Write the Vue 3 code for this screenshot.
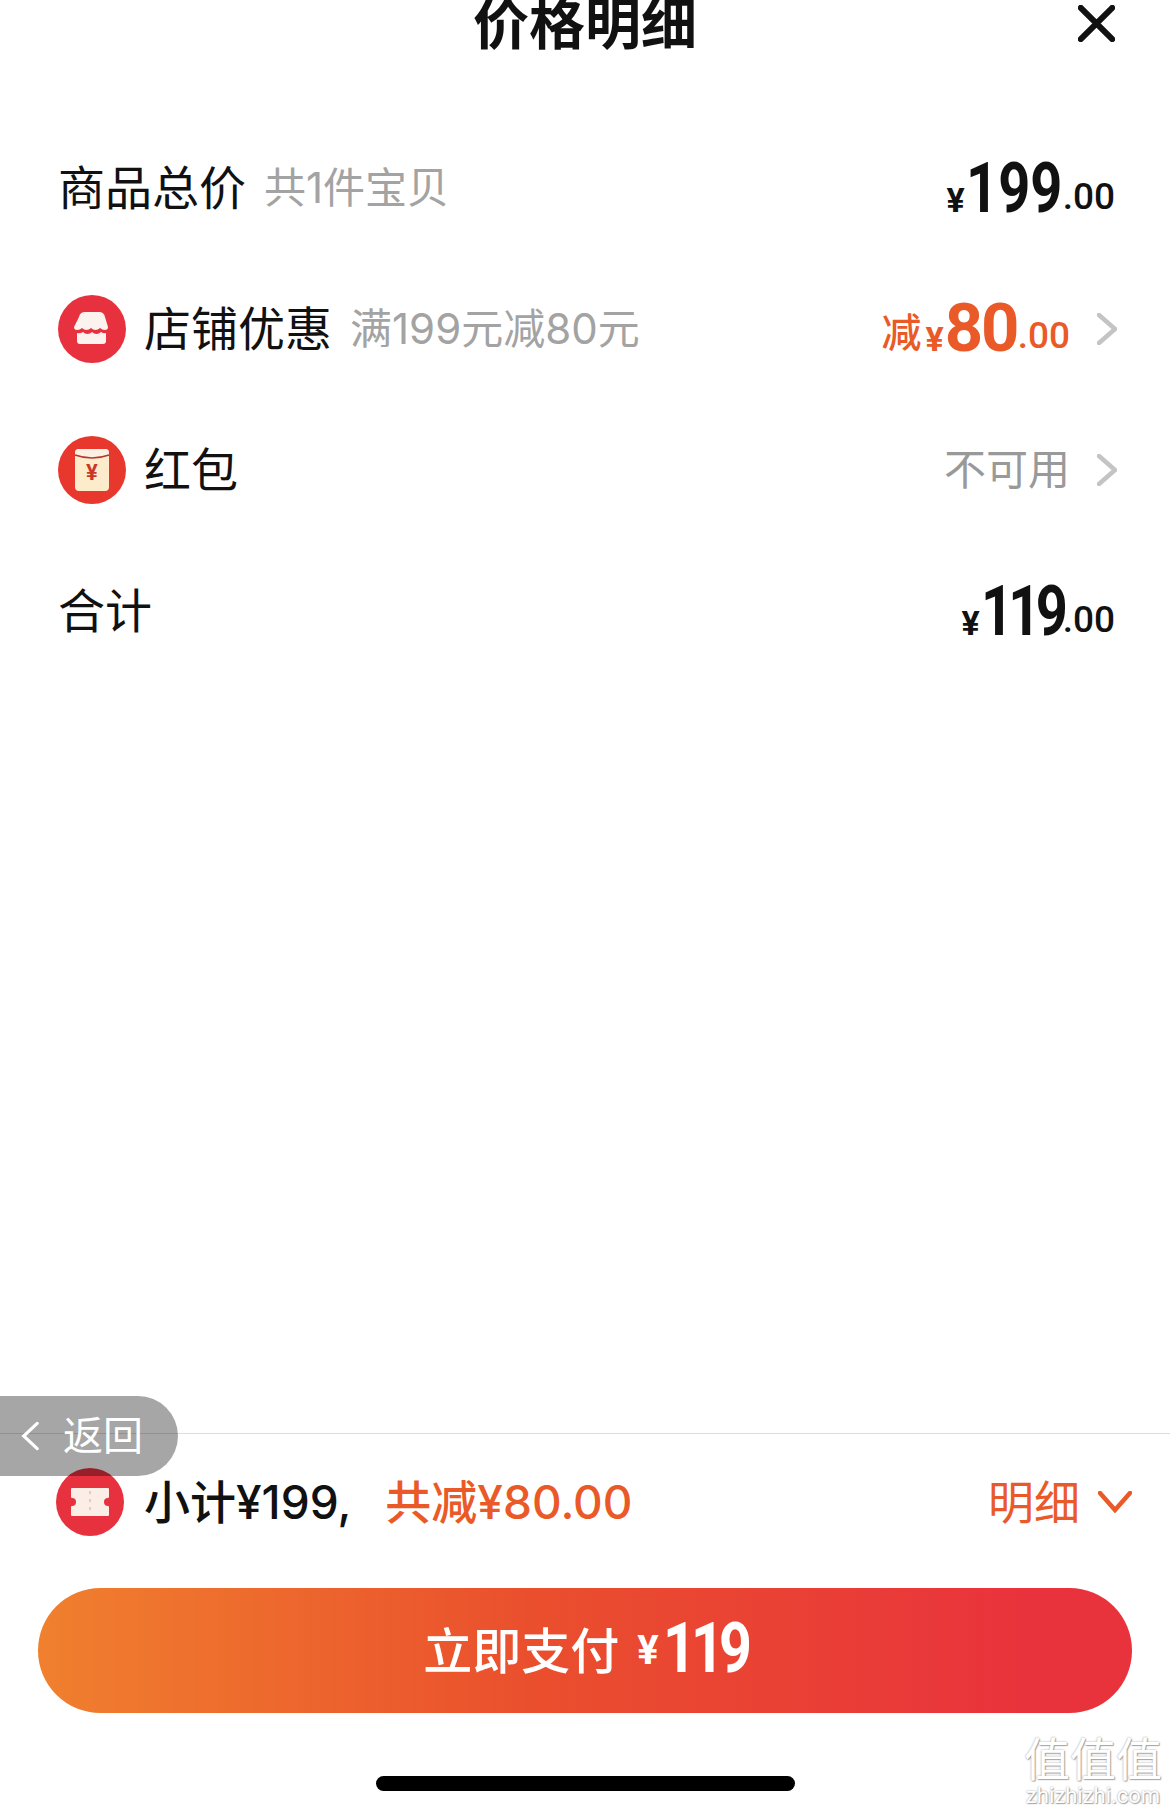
<template>
  <div class="page">
    <header class="head">
      <h1 class="title">价格明细</h1>
      <svg class="close" viewBox="0 0 40 40"><path d="M3 3 37 37M37 3 3 37" /></svg>
    </header>

    <section class="list">
      <div class="row">
        <span class="name">商品总价</span>
        <span class="sub">共1件宝贝</span>
        <div class="price">
          <span class="yen">¥</span><span class="big">199</span><span class="cents">.00</span>
        </div>
      </div>

      <div class="row">
        <svg class="badge" viewBox="0 0 68 68">
          <circle cx="34" cy="34" r="34" fill="#e8313f" />
          <path d="M21 22q1-5 6-5h14q5 0 6 5l3 10q0 3-3 3q-3 0-5-2q-2 2-4.500 2t-4.500-2q-2 2-4.500 2t-4.500-2q-2 2-5 2q-3 0-3-3z" fill="#fdf3ee" />
          <path d="M19 38q3 1 6-1q2 2 4.500 2t4.500-2q2 2 4.500 2t4.500-2q3 2 5 1v8q0 3-3 3h-23q-3 0-3-3z" fill="#fdf3ee" />
        </svg>
        <span class="name">店铺优惠</span>
        <span class="sub">满199元减80元</span>
        <div class="price orange">
          <span class="minus">减</span><span class="yen">¥</span><span class="big wide">80</span><span class="cents">.00</span>
        </div>
        <svg class="arrow" viewBox="0 0 20 32"><path d="M2 2 18 16 2 30" /></svg>
      </div>

      <div class="row">
        <svg class="badge" viewBox="0 0 68 68">
          <circle cx="34" cy="34" r="34" fill="#e8382d" />
          <rect x="17" y="13" width="34" height="42" rx="4" fill="#fdeccb" />
          <path d="M17 17q0-4 4-4h26q4 0 4 4v3q-17 6-34 0z" fill="#fbf0e4" />
          <path d="M17 19q17 6 34 0" fill="none" stroke="#b8372c" stroke-width="1.500" />
          <text x="34" y="44" class="badge-yen">¥</text>
        </svg>
        <span class="name">红包</span>
        <span class="none">不可用</span>
        <svg class="arrow" viewBox="0 0 20 32"><path d="M2 2 18 16 2 30" /></svg>
      </div>

      <div class="row">
        <span class="name">合计</span>
        <div class="price">
          <span class="yen">¥</span><span class="big ones">119</span><span class="cents">.00</span>
        </div>
      </div>
    </section>

    <footer class="foot">
      <div class="back">
        <svg viewBox="0 0 20 32"><path d="M18 2 3 16 18 30" /></svg>
        <span>返回</span>
      </div>

      <div class="summary">
        <svg class="badge" viewBox="0 0 68 68">
          <circle cx="34" cy="34" r="34" fill="#e8313f" />
          <path d="M16 21h36v8a5 5 0 0 0 0 10v8h-36v-8a5 5 0 0 0 0-10z" fill="#fbeee6" stroke="#fbeee6" stroke-width="2" stroke-linejoin="round" />
          <path d="M34 23v22" stroke="#e9c9bd" stroke-width="2" stroke-dasharray="3 5" />
        </svg>
        <span class="total">小计¥199,</span>
        <span class="saved">共减¥80.00</span>
        <span class="detail">明细</span>
        <svg class="down" viewBox="0 0 34 22"><path d="M2 2 17 19 32 2" /></svg>
      </div>

      <button class="pay">
        <span class="pay-text">立即支付</span><span class="pay-yen">¥</span><span class="pay-num">119</span>
      </button>
      <div class="home"></div>

      <div class="mark">
        <span class="mark-top">值值值</span>
        <span class="mark-url">zhizhizhi.com</span>
      </div>
    </footer>
  </div>
</template>

<script setup>
</script>

<style scoped>
.page {
  position: relative;
  display: flex;
  flex-direction: column;
  justify-content: space-between;
  width: 1170px;
  height: 1815px;
  overflow: hidden;
  background: #fff;
  color: #111;
  font-family: Roboto, "Noto Sans CJK SC", sans-serif;
}

.head {
  position: relative;
  height: 50px;
  display: flex;
  justify-content: center;
  align-items: center;
}

.title {
  margin: 0;
  font-size: 56px;
  line-height: 50px;
  font-weight: 700;
}

.close {
  position: absolute;
  right: 55px;
  top: 5px;
  width: 37px;
  height: 37px;
}

.close path {
  fill: none;
  stroke: #111;
  stroke-width: 6.500;
  stroke-linecap: round;
}

.list {
  padding: 67px 55px 0 58px;
  flex: 1;
}

.row {
  display: flex;
  align-items: center;
  height: 141px;
}

.name {
  padding-bottom: 6px;
  font-size: 47px;
  font-weight: 400;
}

.sub {
  margin-left: 18px;
  padding-bottom: 6px;
  font-family: Inter, "Noto Sans CJK SC", sans-serif;
  font-size: 42px;
  color: #a3a3a3;
}

.badge {
  width: 68px;
  height: 68px;
  margin-right: 18px;
  flex: none;
}

.badge-yen {
  font-size: 22px;
  font-weight: 700;
  fill: #c9392b;
  text-anchor: middle;
}

.price {
  margin-left: auto;
  white-space: nowrap;
  font-weight: 500;
}

.price.orange {
  color: #ea5a28;
}

.yen {
  font-size: 34px;
  font-weight: 700;
}

.big {
  display: inline-block;
  width: 95px;
  margin-left: 1px;
  font-size: 70px;
  line-height: 1;
  font-weight: 700;
  transform: scaleX(0.8);
  transform-origin: left;
}

.big.ones {
  width: 80px;
  letter-spacing: -6px;
}

.big.wide {
  width: 71px;
  font-size: 67px;
  letter-spacing: -2px;
  transform: none;
}

.cents {
  margin-left: 2px;
  font-size: 37px;
  vertical-align: 3px;
}

.minus {
  margin-right: 4px;
  font-size: 40px;
  vertical-align: 4px;
}

.none {
  margin-left: auto;
  padding-bottom: 6px;
  font-size: 42px;
  color: #999;
}

.arrow {
  width: 20px;
  height: 32px;
  margin: 0 -2px 0 27px;
  flex: none;
}

.arrow path {
  fill: none;
  stroke: #c4c4c4;
  stroke-width: 4.500;
  stroke-linecap: round;
}

.foot {
  position: relative;
  border-top: 1px solid #ddd;
}

.back {
  position: absolute;
  left: 0;
  top: -38px;
  width: 178px;
  height: 80px;
  display: flex;
  align-items: center;
  gap: 24px;
  padding-left: 21px;
  box-sizing: border-box;
  border-radius: 0 40px 40px 0;
  background: rgba(0, 0, 0, 0.35);
  color: #fff;
  font-size: 40px;
}

.back span {
  padding-bottom: 6px;
}

.back svg {
  width: 18px;
  height: 30px;
  flex: none;
}

.back path {
  fill: none;
  stroke: #fff;
  stroke-width: 3.500;
  stroke-linecap: round;
}

.summary {
  display: flex;
  align-items: center;
  height: 136px;
  padding: 0 38px 0 56px;
}

.summary .badge {
  margin-right: 20px;
}

.total,
.saved {
  padding-bottom: 6px;
  font-family: Inter, "Noto Sans CJK SC", sans-serif;
  font-size: 46px;
  font-weight: 500;
}

.saved {
  margin-left: 34px;
  color: #ea5a28;
}

.detail {
  margin-left: auto;
  padding-bottom: 6px;
  font-size: 46px;
  color: #ea5a28;
}

.down {
  width: 34px;
  height: 22px;
  margin-left: 18px;
}

.down path {
  fill: none;
  stroke: #ea5a28;
  stroke-width: 4.500;
  stroke-linecap: round;
}

.pay {
  display: flex;
  justify-content: center;
  align-items: center;
  width: 1094px;
  height: 125px;
  margin: 18px 38px 0;
  padding: 0 0 6px 0;
  border: 0;
  border-radius: 63px;
  background: linear-gradient(90deg, #f0802e, #ea4f2d 45%, #e9333c 90%);
  color: #fff;
  font-family: inherit;
  font-weight: 700;
}

.pay-text {
  font-size: 49px;
  font-weight: 500;
}

.pay-yen {
  margin: 6px 4px 0 18px;
  font-size: 40px;
}

.pay-num {
  display: inline-block;
  width: 84px;
  font-size: 70px;
  line-height: 1;
  letter-spacing: -6px;
  transform: scaleX(0.82);
  transform-origin: left;
  text-align: left;
}

.home {
  width: 419px;
  height: 15px;
  margin: 63px auto 24px;
  border-radius: 8px;
  background: #000;
}

.mark {
  position: absolute;
  right: 8px;
  bottom: 8px;
  display: flex;
  flex-direction: column;
  align-items: center;
  color: #fff;
  text-shadow: 0 0 2px #999, 1px 1px 1px #aaa;
}

.mark-top {
  font-size: 46px;
  line-height: 50px;
}

.mark-url {
  font-size: 22px;
  line-height: 22px;
}
</style>
